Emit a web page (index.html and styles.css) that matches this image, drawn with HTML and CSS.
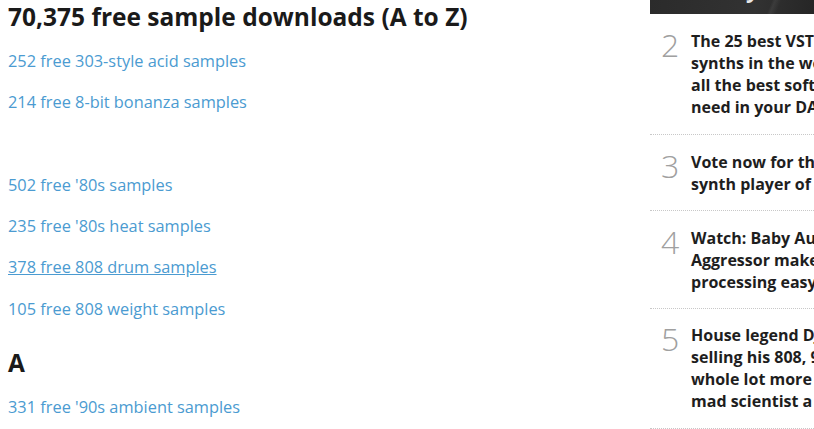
FILE: index.html
```html
<!DOCTYPE html>
<html lang="en">
<head>
<meta charset="utf-8">
<title>Free sample downloads</title>
<link rel="stylesheet" href="styles.css">
</head>
<body>
<div class="page">
  <main class="main">
    <h1 class="title">70,375 free sample downloads (A to Z)</h1>
    <ul class="links">
      <li><a href="#">252 free 303-style acid samples</a></li>
      <li><a href="#">214 free 8-bit bonanza samples</a></li>
      <li class="empty"><a href="#"></a></li>
      <li><a href="#">502 free '80s samples</a></li>
      <li><a href="#">235 free '80s heat samples</a></li>
      <li><a href="#" class="hover">378 free 808 drum samples</a></li>
      <li><a href="#">105 free 808 weight samples</a></li>
    </ul>
    <h2 class="letter">A</h2>
    <ul class="links links-after">
      <li><a href="#">331 free '90s ambient samples</a></li>
    </ul>
  </main>
  <aside class="side">
    <div class="hero"><span class="hero-text">Baby Audio</span></div>
    <ol class="popular">
      <li class="item"><span class="num">2</span><a href="#" class="headline">The 25 best VST<br>synths in the world:<br>all the best software<br>need in your DAW</a></li>
      <li class="item tight"><span class="num">3</span><a href="#" class="headline">Vote now for the best<br>synth player of 2019</a></li>
      <li class="item tight"><span class="num">4</span><a href="#" class="headline">Watch: Baby Audio's<br>Aggressor makes<br>processing easy</a></li>
      <li class="item last"><span class="num">5</span><a href="#" class="headline">House legend DJ is<br>selling his 808, 909<br>whole lot more<br>mad scientist a</a></li>
    </ol>
  </aside>
</div>
</body>
</html>
```

FILE: styles.css
```css
html, body {
  margin: 0;
  padding: 0;
  overflow: hidden;
  background: #fff;
}
body {
  font-family: "Open Sans", "Liberation Sans", sans-serif;
  color: #1a1a1a;
  width: 814px;
  height: 429px;
}
.page {
  display: flex;
  width: 980px;
}
.main {
  flex: 0 0 650px;
  box-sizing: border-box;
  padding-left: 8px;
}
.title {
  margin: 1px 0 0;
  font-size: 24.5px;
  line-height: 32px;
  font-weight: 700;
  color: #1a1a1a;
}
.links {
  list-style: none;
  margin: 16px 0 0;
  padding: 0;
}
.links-after {
  margin-top: 16px;
}
.links li {
  font-size: 16.35px;
  line-height: 24px;
  height: 24px;
  margin-bottom: 17.1px;
}
.links li.empty {
  height: 25px;
}
.links a {
  color: #4b9bd1;
  text-decoration: none;
}
.links a.hover {
  text-decoration: underline;
}
.letter {
  margin: 26px 0 0;
  font-size: 24.5px;
  line-height: 32px;
  font-weight: 700;
  color: #1a1a1a;
}
.side {
  flex: 0 0 300px;
}
.hero {
  height: 14px;
  overflow: hidden;
  background:
    linear-gradient(118deg, transparent 0 62%, rgba(120,120,120,0.35) 62.5%, transparent 63.5% 100%),
    linear-gradient(112deg, transparent 0 40%, rgba(90,90,90,0.3) 41%, transparent 43% 100%),
    linear-gradient(100deg, #2b2b2b 0%, #323232 35%, #262626 55%, #2e2e2e 100%);
}
.hero-text {
  display: block;
  margin: -23px 0 0 48px;
  font-size: 22px;
  line-height: 24px;
  font-weight: 700;
  color: #e8e8e8;
  letter-spacing: 2px;
}
.popular {
  list-style: none;
  margin: 0;
  padding: 0;
}
.item {
  display: flex;
  align-items: flex-start;
  padding: 16px 0 16px;
  border-bottom: 1px dotted #c8c8c8;
}
.item.tight {
  padding-bottom: 15px;
}
.item.last {
  padding-top: 15px;
}
.num {
  flex: 0 0 41px;
  box-sizing: border-box;
  padding-left: 11px;
  margin-top: -1px;
  font-size: 32px;
  line-height: 32px;
  font-weight: 300;
  color: #a0a0a0;
}
.headline {
  font-size: 16px;
  line-height: 22px;
  font-weight: 700;
  color: #1e1e1e;
  text-decoration: none;
  white-space: nowrap;
}
```
